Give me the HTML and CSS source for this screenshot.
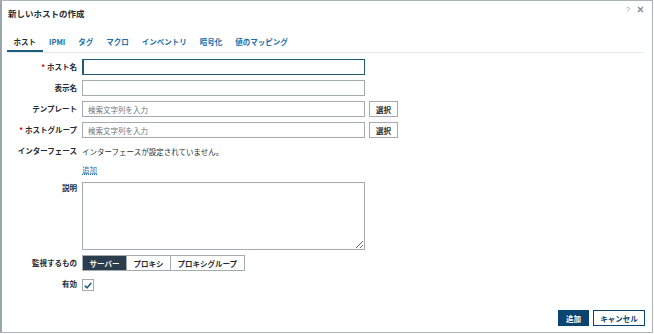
FILE: index.html
```html
<!DOCTYPE html>
<html lang="ja">
  <head>
    <meta charset="UTF-8" />
    <meta name="viewport" content="width=device-width, initial-scale=1.0" />
    <title>新しいホストの作成</title>
    <link rel="stylesheet" href="styles.css">
  </head>
  <body>
    <div class="dialog">
      <div class="head">
        <h4 class="title">新しいホストの作成</h4>
        <div class="head-icons">
          <span class="help">?</span>
          <svg class="close" width="7" height="7" viewBox="0 0 7 7">
            <path d="M1 1 L6 6 M6 1 L1 6" stroke="#7d888f" stroke-width="1.3" />
          </svg>
        </div>
      </div>

      <ul class="tabs">
        <li class="tab active">ホスト</li>
        <li class="tab">IPMI</li>
        <li class="tab">タグ</li>
        <li class="tab">マクロ</li>
        <li class="tab">インベントリ</li>
        <li class="tab">暗号化</li>
        <li class="tab">値のマッピング</li>
      </ul>

      <div class="form">
        <label class="label"><span class="req">*</span>ホスト名</label>
        <div class="field"><input class="input focused" type="text" /></div>

        <label class="label">表示名</label>
        <div class="field"><input class="input" type="text" /></div>

        <label class="label">テンプレート</label>
        <div class="field">
          <input class="input" type="text" placeholder="検索文字列を入力" />
          <button class="btn-select">選択</button>
        </div>

        <label class="label"><span class="req">*</span>ホストグループ</label>
        <div class="field">
          <input class="input" type="text" placeholder="検索文字列を入力" />
          <button class="btn-select">選択</button>
        </div>

        <label class="label">インターフェース</label>
        <div class="field text">インターフェースが設定されていません。</div>

        <div></div>
        <div class="field link-row"><a class="link">追加</a></div>

        <label class="label top">説明</label>
        <div class="field"><textarea class="textarea"></textarea></div>

        <label class="label">監視するもの</label>
        <div class="field">
          <div class="segments">
            <span class="seg on">サーバー</span>
            <span class="seg">プロキシ</span>
            <span class="seg">プロキシグループ</span>
          </div>
        </div>

        <label class="label">有効</label>
        <div class="field">
          <span class="checkbox">
            <svg width="8" height="7" viewBox="0 0 8 7">
              <path d="M0.8 3.6 L3 5.8 L7.2 1" fill="none" stroke="#1f5c82" stroke-width="1.5" />
            </svg>
          </span>
        </div>
      </div>

      <div class="footer">
        <button class="btn-primary">追加</button>
        <button class="btn-alt">キャンセル</button>
      </div>
    </div>
  </body>
</html>
```

FILE: styles.css
```css
* {
  padding: 0px;
  margin: 0px;
  box-sizing: border-box;
  font-family: "Noto Sans CJK JP", "Noto Sans", sans-serif;
}

body {
  background-color: #fff;
  color: #1f2c33;
  font-size: 7.5px;
}

.dialog {
  width: 653px;
  height: 333px;
  border: 1px solid #aab4bb;
  border-left: 2px solid #9aa6ae;
  padding: 0 6px 0 5px;
  display: flex;
  flex-direction: column;
}

.head {
  height: 27px;
  padding-top: 6px;
  display: flex;
  align-items: flex-start;
  justify-content: space-between;
}

.title {
  font-size: 8.5px;
  line-height: 12px;
  font-weight: bold;
  padding-left: 1px;
}

.head-icons {
  display: flex;
  align-items: center;
  gap: 7px;
  margin-top: -1px;
  margin-right: 2px;
}

.help {
  font-size: 7px;
  color: #8a959c;
  font-family: "Liberation Sans", sans-serif;
}

.tabs {
  list-style: none;
  display: flex;
  height: 25px;
  align-items: stretch;
  border-bottom: 1px solid #e5e8ea;
  margin-right: 3px;
}

.tab {
  padding: 4px 6.5px 0;
  font-size: 7.5px;
  font-weight: bold;
  color: #1b6ea8;
  display: flex;
  align-items: center;
  border-bottom: 2px solid transparent;
}

.tab.active {
  color: #1f2c33;
  border-bottom-color: #1f5c82;
}

.form {
  display: grid;
  grid-template-columns: 70px auto;
  column-gap: 5px;
  row-gap: 5px;
  margin-top: 6px;
  align-items: center;
}

.label {
  text-align: right;
  font-weight: bold;
  font-size: 7.5px;
  line-height: 16px;
}

.label.top {
  align-self: start;
}

.req {
  color: #d40000;
  margin-right: 2px;
}

.field {
  display: flex;
  align-items: center;
  gap: 4px;
  min-height: 16px;
}

.field.text {
  font-size: 7.5px;
}

.link-row {
  min-height: 10px;
}

.link {
  color: #1b6ea8;
  font-size: 7.5px;
  text-decoration: underline dotted;
}

.input {
  width: 283px;
  height: 16px;
  border: 1px solid #a3acb2;
  padding: 0 5px;
  font-size: 7.5px;
  outline: none;
}

.input::placeholder {
  color: #6b757c;
}

.input.focused {
  border-color: #1f5c6e;
  border-left: 2px solid #1f5c6e;
}

.btn-select {
  width: 29px;
  height: 16px;
  background-color: #fff;
  border: 1px solid #a3acb2;
  font-size: 7.5px;
  font-weight: bold;
  color: #1f2c33;
}

.textarea {
  width: 283px;
  height: 68px;
  border: 1px solid #a3acb2;
  margin-top: 2px;
  resize: vertical;
  outline: none;
}

.segments {
  display: flex;
  border: 1px solid #a3acb2;
  height: 16px;
}

.seg {
  display: flex;
  align-items: center;
  padding: 0 6.5px;
  font-size: 7.5px;
  font-weight: bold;
  border-left: 1px solid #a3acb2;
}

.seg:first-child {
  border-left: none;
}

.seg.on {
  background-color: #2c3e4e;
  color: #fff;
}

.checkbox {
  width: 12px;
  height: 12px;
  border: 1px solid #a3acb2;
  display: flex;
  align-items: center;
  justify-content: center;
  margin-top: 2px;
}

.footer {
  margin-top: auto;
  margin-bottom: 6px;
  display: flex;
  justify-content: flex-end;
  gap: 4px;
  padding-right: 1px;
}

.btn-primary {
  height: 16px;
  width: 31px;
  background-color: #0b4470;
  border: 1px solid #0b4470;
  color: #fff;
  font-size: 7.5px;
  font-weight: bold;
}

.btn-alt {
  height: 16px;
  width: 52px;
  background-color: #fff;
  border: 1px solid #0b4470;
  color: #0b4470;
  font-size: 7.5px;
  font-weight: bold;
}
```
